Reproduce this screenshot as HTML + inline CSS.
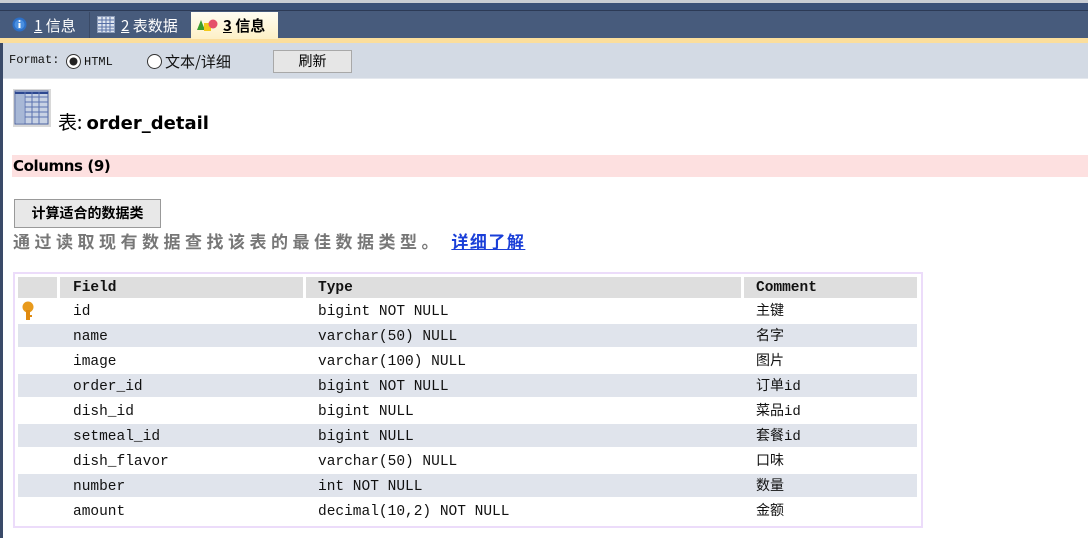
<!DOCTYPE html>
<html><head><meta charset="utf-8"><style>
*{margin:0;padding:0;box-sizing:border-box}
body{width:1088px;height:538px;overflow:hidden;background:#fff;font-family:"Liberation Sans","Noto Sans CJK SC",sans-serif;position:relative}
.abs{position:absolute}
.mono{font-family:"Liberation Mono","Noto Sans CJK SC",monospace;font-size:14.5px;color:#111}
.cjk{font-family:"Noto Sans CJK SC","WenQuanYi Zen Hei",sans-serif}
.tab{position:absolute;top:12px;height:26px;font-size:15px;color:#fff;line-height:28px;padding-left:8px}
.tab u{text-decoration:underline}
.row{position:absolute;left:18px;width:899px;height:23px;line-height:23px}
.row span{position:absolute;top:2px}
.row span.c{font-size:14px}
</style></head><body>
<div class="abs" style="left:0;top:0;width:1088px;height:3px;background:#c8ccd4"></div>
<div class="abs" style="left:0;top:3px;width:1088px;height:8px;background:#3a5078"></div>
<div class="abs" style="left:0;top:10px;width:1088px;height:1px;background:#2c3a55"></div>
<div class="abs" style="left:0;top:11px;width:1088px;height:27px;background:#475b7c"></div>
<div class="abs" style="left:0;top:38px;width:1088px;height:5px;background:#fbde9c"></div>
<div class="abs" style="left:0;top:43px;width:1088px;height:35px;background:#d3dae4"></div>
<div class="abs" style="left:0;top:78px;width:1088px;height:1px;background:#e4e8ee"></div>
<div class="abs" style="left:0;top:43px;width:3px;height:495px;background:#3a4a68"></div>

<div class="tab cjk" style="left:4px;width:86px;border-right:1px solid #3a4a66">
 <svg class="abs" style="left:8px;top:5px" width="15" height="15"><circle cx="7.5" cy="7.5" r="7" fill="#2d6fc6"/><circle cx="7.5" cy="7.5" r="5" fill="#4a8fe0"/><rect x="6.5" y="6" width="2" height="5" fill="#fff"/><circle cx="7.5" cy="4" r="1" fill="#fff"/></svg>
 <span style="margin-left:22px"><u>1</u> 信息</span></div>
<div class="tab cjk" style="left:91px;width:100px">
 <svg class="abs" style="left:6px;top:4px" width="18" height="17"><rect x="0.5" y="0.5" width="17" height="16" fill="#dfe6f0" stroke="#8b9bb8"/><path d="M1 4h16M1 7.5h16M1 11h16M1 14h16M5 1v15M9 1v15M13 1v15" stroke="#5770a6"/></svg>
 <span style="margin-left:22px"><u>2</u> 表数据</span></div>
<div class="tab cjk" style="left:191px;width:87px;background:linear-gradient(#fffdf2,#fdf0c6);color:#000;font-weight:bold;height:27px">
 <svg class="abs" style="left:6px;top:6px" width="22" height="14"><path d="M0 12L4 2L8 12Z" fill="#3b9d2c"/><rect x="7" y="5" width="7" height="8" fill="#f2c919"/><circle cx="16" cy="6" r="4.5" fill="#e5506a"/></svg>
 <span style="margin-left:24px"><u>3</u> 信息</span></div>

<div class="abs mono" style="left:9px;top:53px;font-size:12px">Format:</div>
<svg class="abs" style="left:65px;top:53px" width="17" height="17"><circle cx="8.5" cy="8.5" r="7" fill="#fff" stroke="#333"/><circle cx="8.5" cy="8.5" r="4" fill="#222"/></svg>
<div class="abs mono" style="left:84px;top:55px;font-size:12px">HTML</div>
<svg class="abs" style="left:146px;top:53px" width="17" height="17"><circle cx="8.5" cy="8.5" r="7" fill="#fff" stroke="#333"/></svg>
<div class="abs cjk" style="left:165px;top:51px;font-size:15px;color:#111">文本/详细</div>
<div class="abs cjk" style="left:273px;top:50px;width:79px;height:23px;background:#e6e6e6;border:1px solid #a8a8a8;font-size:14px;text-align:center;line-height:21px">刷新</div>

<svg class="abs" style="left:13px;top:89px" width="38" height="38"><rect x="0" y="0" width="38" height="38" fill="#d8d8d8"/><rect x="2" y="2" width="33" height="33" fill="#c8d2e4" stroke="#4a62a0"/><path d="M2 4h33" stroke="#2c4790" stroke-width="2"/><path d="M12 8h23M12 13h23M12 18h23M12 23h23M12 28h23M12 3v32M19 3v32M26 3v32" stroke="#5a72b0"/><rect x="3" y="5" width="8" height="29" fill="#a8b8d6"/></svg>
<div class="abs cjk" style="left:58px;top:108px;font-size:19px;color:#000">表: <b style="font-family:'DejaVu Sans',sans-serif;font-size:18px">order_detail</b></div>

<div class="abs" style="left:12px;top:155px;width:1076px;height:22px;background:#fde0e0"></div>
<div class="abs" style="left:13px;top:157px;font-size:15px;font-weight:bold;font-family:'DejaVu Sans',sans-serif;letter-spacing:-0.4px">Columns (9)</div>

<div class="abs cjk" style="left:14px;top:199px;width:147px;height:29px;background:#e8e8e8;border:1px solid #999;font-size:14px;font-weight:bold;text-align:center;line-height:27px">计算适合的数据类</div>
<div class="abs cjk" style="left:13px;top:228px;font-size:17px;color:#777;font-weight:bold;letter-spacing:4.5px;white-space:nowrap">通过读取现有数据查找该表的最佳数据类型。 <a style="color:#1a3fd8;text-decoration:underline;letter-spacing:1.5px">详细了解</a></div>

<div class="abs" style="left:13px;top:272px;width:910px;height:256px;border:2px solid #ecdcfa"></div>
<div class="abs" style="left:18px;top:277px;width:39px;height:21px;background:#dedede"></div>
<div class="abs" style="left:60px;top:277px;width:243px;height:21px;background:#dedede"></div>
<div class="abs" style="left:306px;top:277px;width:435px;height:21px;background:#dedede"></div>
<div class="abs" style="left:744px;top:277px;width:173px;height:21px;background:#dedede"></div>
<div class="row mono" style="top:277px;height:21px;line-height:21px;font-weight:bold"><span style="left:55px;top:1px">Field</span><span style="left:300px;top:1px">Type</span><span style="left:738px;top:1px">Comment</span></div>

<div class="row mono" style="top:299px"><svg class="abs" style="left:3px;top:2px" width="14" height="20"><circle cx="7" cy="6" r="5.5" fill="#e89a1c"/><rect x="5" y="9" width="4" height="10" fill="#e08a10"/><rect x="8" y="14" width="3" height="2" fill="#e08a10"/></svg><span style="left:55px">id</span><span style="left:300px">bigint NOT NULL</span><span class="c" style="left:738px">主键</span></div>
<div class="row mono" style="top:324px;background:#e0e4ec"><span style="left:55px">name</span><span style="left:300px">varchar(50) NULL</span><span class="c" style="left:738px">名字</span></div>
<div class="row mono" style="top:349px"><span style="left:55px">image</span><span style="left:300px">varchar(100) NULL</span><span class="c" style="left:738px">图片</span></div>
<div class="row mono" style="top:374px;background:#e0e4ec"><span style="left:55px">order_id</span><span style="left:300px">bigint NOT NULL</span><span class="c" style="left:738px">订单id</span></div>
<div class="row mono" style="top:399px"><span style="left:55px">dish_id</span><span style="left:300px">bigint NULL</span><span class="c" style="left:738px">菜品id</span></div>
<div class="row mono" style="top:424px;background:#e0e4ec"><span style="left:55px">setmeal_id</span><span style="left:300px">bigint NULL</span><span class="c" style="left:738px">套餐id</span></div>
<div class="row mono" style="top:449px"><span style="left:55px">dish_flavor</span><span style="left:300px">varchar(50) NULL</span><span class="c" style="left:738px">口味</span></div>
<div class="row mono" style="top:474px;background:#e0e4ec"><span style="left:55px">number</span><span style="left:300px">int NOT NULL</span><span class="c" style="left:738px">数量</span></div>
<div class="row mono" style="top:499px"><span style="left:55px">amount</span><span style="left:300px">decimal(10,2) NOT NULL</span><span class="c" style="left:738px">金额</span></div>
</body></html>
